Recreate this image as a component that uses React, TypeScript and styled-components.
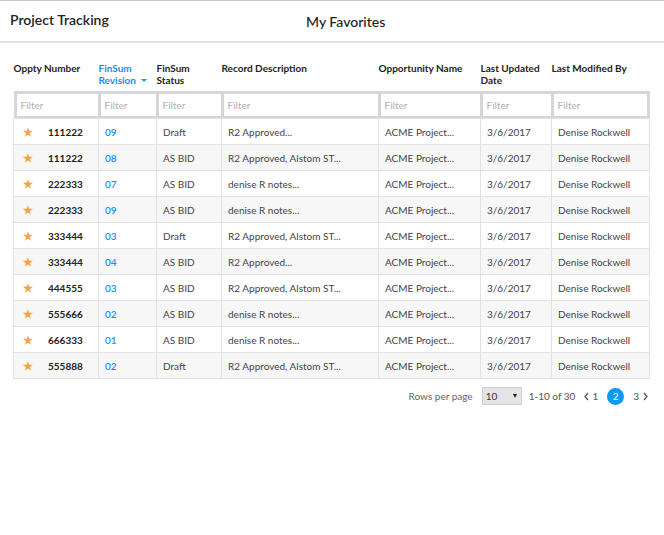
import React from "react";
import styled, { createGlobalStyle } from "styled-components";

const Global = createGlobalStyle`
  html, body { margin: 0; padding: 0; background: #fff; }
  body { font-family: Lato, "Open Sans", sans-serif; color: #333; }
`;

const Page = styled.div`
  width: 664px;
  height: 535px;
  border-top: 1px solid #c8c8c8;
  box-sizing: border-box;
`;

const Header = styled.header`
  height: 40px;
  border-bottom: 2px solid #e2e2e2;
  position: relative;
  display: flex;
  align-items: center;
  padding-left: 10px;
`;

const Title = styled.h1`
  margin: 0;
  font-size: 14px;
  font-weight: 600;
  color: #222;
  margin-top: -4px;
`;

const Center = styled.h2`
  margin: 0;
  position: absolute;
  left: 306px;
  top: 12px;
  font-size: 14px;
  font-weight: 500;
  color: #222;
`;

const Body = styled.div`
  padding: 19px 15px 0 13px;
`;

const Table = styled.table`
  border-collapse: collapse;
  table-layout: fixed;
  width: 636px;
  font-size: 10px;
`;

const Th = styled.th<{ $active?: boolean }>`
  text-align: left;
  vertical-align: top;
  font-weight: 700;
  color: ${(p) => (p.$active ? "#1a8cff" : "#222")};
  padding: 0 0 5px 0;
  line-height: 12px;
  font-size: 10px;
`;

const Caret = styled.span`
  display: inline-block;
  width: 0;
  height: 0;
  border-left: 3px solid transparent;
  border-right: 3px solid transparent;
  border-top: 3px solid #1a8cff;
  margin-left: 5px;
  vertical-align: 2px;
`;

const FilterRow = styled.tr`
  background: #d6d6d6;
`;

const FilterCell = styled.td<{ $first?: boolean; $last?: boolean }>`
  padding: 3px ${(p) => (p.$last ? 3 : 1)}px 2px ${(p) => (p.$first ? 3 : 2)}px;
  height: 22px;
`;

const FilterInput = styled.div`
  height: 22px;
  background: #fff;
  box-sizing: border-box;
  font-size: 10px;
  color: #b0b0b0;
  padding-left: 4px;
  display: flex;
  align-items: center;
`;

const Row = styled.tr<{ $alt: boolean }>`
  background: ${(p) => (p.$alt ? "#f7f7f7" : "#fff")};
  height: 26px;
`;

const Td = styled.td`
  border: 1px solid #e2e2e2;
  padding: 0 6px;
  color: #444;
  white-space: nowrap;
  overflow: hidden;
  height: 25px;
`;

const NumCell = styled.div`
  display: flex;
  align-items: center;
  font-weight: 700;
  color: #222;
`;

const Star = styled.span`
  color: #f5a43a;
  font-size: 11px;
  width: 25px;
  padding-left: 3px;
`;

const Link = styled.span`
  color: #1a8cff;
  font-weight: 600;
`;

const Pager = styled.div`
  display: flex;
  justify-content: flex-end;
  align-items: center;
  margin-top: 8px;
  font-size: 10px;
  color: #555;
`;

const Label = styled.span`
  margin-right: 9px;
  color: #666;
`;

const Select = styled.div`
  width: 40px;
  height: 18px;
  box-sizing: border-box;
  background: #e4e4e4;
  border: 1px solid #cfcfcf;
  display: flex;
  align-items: center;
  justify-content: space-between;
  padding: 0 4px 0 3px;
  color: #333;
  margin-right: 7px;
`;

const SmallCaret = styled.span`
  width: 0;
  height: 0;
  border-left: 2.5px solid transparent;
  border-right: 2.5px solid transparent;
  border-top: 4px solid #222;
`;

const Range = styled.span`
  margin-right: 8px;
`;

const PageNum = styled.span<{ $active?: boolean }>`
  display: inline-flex;
  align-items: center;
  justify-content: center;
  width: ${(p) => (p.$active ? "17px" : "auto")};
  height: 17px;
  border-radius: 50%;
  background: ${(p) => (p.$active ? "#0c9af3" : "transparent")};
  color: ${(p) => (p.$active ? "#fff" : "#555")};
  margin: 0 ${(p) => (p.$active ? "9px" : "0")};
`;

const Chevron = styled.svg<{ $right?: boolean }>`
  width: 7px;
  height: 9px;
  margin: ${(p) => (p.$right ? "0 0 0 3px" : "0 2px 0 0")};
`;

const cols = [85, 58, 65, 157, 102, 71, 98];

const rows = [
  ["111222", "09", "Draft", "R2 Approved..."],
  ["111222", "08", "AS BID", "R2 Approved, Alstom ST..."],
  ["222333", "07", "AS BID", "denise R notes..."],
  ["222333", "09", "AS BID", "denise R notes..."],
  ["333444", "03", "Draft", "R2 Approved, Alstom ST..."],
  ["333444", "04", "AS BID", "R2 Approved..."],
  ["444555", "03", "AS BID", "R2 Approved, Alstom ST..."],
  ["555666", "02", "AS BID", "denise R notes..."],
  ["666333", "01", "AS BID", "denise R notes..."],
  ["555888", "02", "Draft", "R2 Approved, Alstom ST..."],
];

export default function App() {
  return (
    <Page>
      <Global />
      <Header>
        <Title>Project Tracking</Title>
        <Center>My Favorites</Center>
      </Header>
      <Body>
        <Table>
          <colgroup>
            {cols.map((w, i) => (
              <col key={i} style={{ width: w }} />
            ))}
          </colgroup>
          <thead>
            <tr>
              <Th>Oppty Number</Th>
              <Th $active>
                FinSum
                <br />
                Revision<Caret />
              </Th>
              <Th>
                FinSum
                <br />
                Status
              </Th>
              <Th>Record Description</Th>
              <Th>Opportunity Name</Th>
              <Th>
                Last Updated
                <br />
                Date
              </Th>
              <Th>Last Modified By</Th>
            </tr>
            <FilterRow>
              {cols.map((_, i) => (
                <FilterCell key={i} $first={i === 0} $last={i === cols.length - 1}>
                  <FilterInput>Filter</FilterInput>
                </FilterCell>
              ))}
            </FilterRow>
          </thead>
          <tbody>
            {rows.map((r, i) => (
              <Row key={i} $alt={i % 2 === 1}>
                <Td>
                  <NumCell>
                    <Star>★</Star>
                    {r[0]}
                  </NumCell>
                </Td>
                <Td>
                  <Link>{r[1]}</Link>
                </Td>
                <Td>{r[2]}</Td>
                <Td>{r[3]}</Td>
                <Td>ACME Project...</Td>
                <Td>3/6/2017</Td>
                <Td>Denise Rockwell</Td>
              </Row>
            ))}
          </tbody>
        </Table>
        <Pager>
          <Label>Rows per page</Label>
          <Select>
            10
            <SmallCaret />
          </Select>
          <Range>1-10 of 30</Range>
          <Chevron viewBox="0 0 7 9">
            <path d="M5 1 L2 4.5 L5 8" fill="none" stroke="#555" strokeWidth="1.3" />
          </Chevron>
          <PageNum>1</PageNum>
          <PageNum $active>2</PageNum>
          <PageNum>3</PageNum>
          <Chevron $right viewBox="0 0 7 9">
            <path d="M2 1 L5 4.5 L2 8" fill="none" stroke="#555" strokeWidth="1.3" />
          </Chevron>
        </Pager>
      </Body>
    </Page>
  );
}
